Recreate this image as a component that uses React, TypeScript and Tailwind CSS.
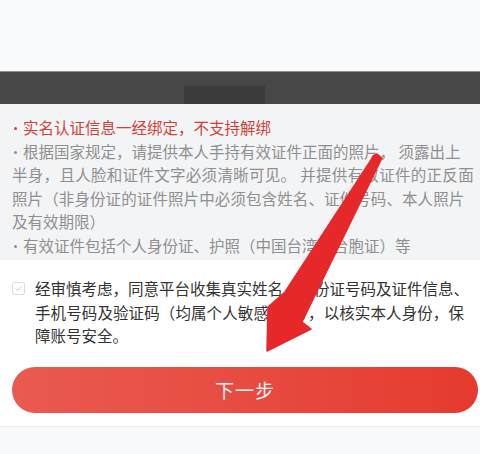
import React from "react";

const font = { fontFamily: '"Noto Sans CJK SC", "Noto Sans", sans-serif' };

function Dot() {
  return <span className="mr-[6px] ml-[2px] inline-block h-[3px] w-[3px] translate-y-[-4px] rounded-full bg-current" />;
}

export default function App() {
  return (
    <div className="relative flex h-[454px] w-[480px] flex-col overflow-hidden bg-white" style={font}>
      {/* top blank */}
      <div className="h-[71px] bg-[#f9fafc]" />

      {/* dark band */}
      <div className="flex h-[33px] items-end border-t border-[#8c8c8c] bg-[#474747]">
        <div className="ml-[184px] h-[18px] w-[81px] bg-[#3b3b3b]" />
      </div>

      {/* notice panel */}
      <div className="h-[156px] bg-[#f3f4f6] pl-[12px] pt-[12px] text-[15.5px] leading-[23.6px] text-[#8f8f8f]">
        <div className="whitespace-nowrap text-[#d43f37]">
          <Dot />实名认证信息一经绑定，不支持解绑
        </div>
        <div className="whitespace-nowrap">
          <Dot />根据国家规定，请提供本人手持有效证件正面的照片， 须露出上
        </div>
        <div className="whitespace-nowrap tracking-[0.3px]">半身，且人脸和证件文字必须清晰可见。 并提供有效证件的正反面</div>
        <div className="whitespace-nowrap tracking-[0.1px]">照片（非身份证的证件照片中必须包含姓名、证件号码、本人照片</div>
        <div className="whitespace-nowrap">及有效期限）</div>
        <div className="whitespace-nowrap">
          <Dot />有效证件包括个人身份证、护照（中国台湾为台胞证）等
        </div>
      </div>

      {/* agreement + button */}
      <div className="h-[166px] bg-white pt-[17px]">
        <div className="flex gap-[10px] px-[12px]">
          <div className="mt-[5px] flex h-[13px] w-[13px] shrink-0 items-center justify-center rounded-[2px] border border-[#dcdcdc]">
            <svg viewBox="0 0 12 12" className="h-[9px] w-[9px]" fill="none" stroke="#c4c4c4" strokeWidth="1.3">
              <path d="M2.5 6.2l2.3 2.3 4.7-5" />
            </svg>
          </div>
          <div className="text-[15.5px] leading-[23.6px] text-[#333333]">
            <div className="whitespace-nowrap">经审慎考虑，同意平台收集真实姓名、身份证号码及证件信息、</div>
            <div className="whitespace-nowrap tracking-[0.1px]">手机号码及验证码（均属个人敏感信息），以核实本人身份，保</div>
            <div className="whitespace-nowrap">障账号安全。</div>
          </div>
        </div>
        <div className="ml-[12px] mt-[19px] flex h-[46px] w-[466px] items-center justify-center rounded-full bg-gradient-to-r from-[#e95a51] to-[#e53a2e]">
          <span className="text-[19px] tracking-[1px] text-[#fff3f2]">下一步</span>
        </div>
      </div>

      {/* bottom */}
      <div className="flex-1 border-t border-[#ececec] bg-[#f8f9fb]" />

      {/* red annotation arrow */}
      <svg className="pointer-events-none absolute left-0 top-0" width="480" height="454" viewBox="0 0 480 454">
        <polygon
          points="377,154 382,158 380,162 302,322 311,329 267,351 268,307 285,292 371,160 373,156"
          fill="#e6282b"
          stroke="#e6282b"
          strokeWidth="1.5"
          strokeLinejoin="round"
        />
      </svg>
    </div>
  );
}
